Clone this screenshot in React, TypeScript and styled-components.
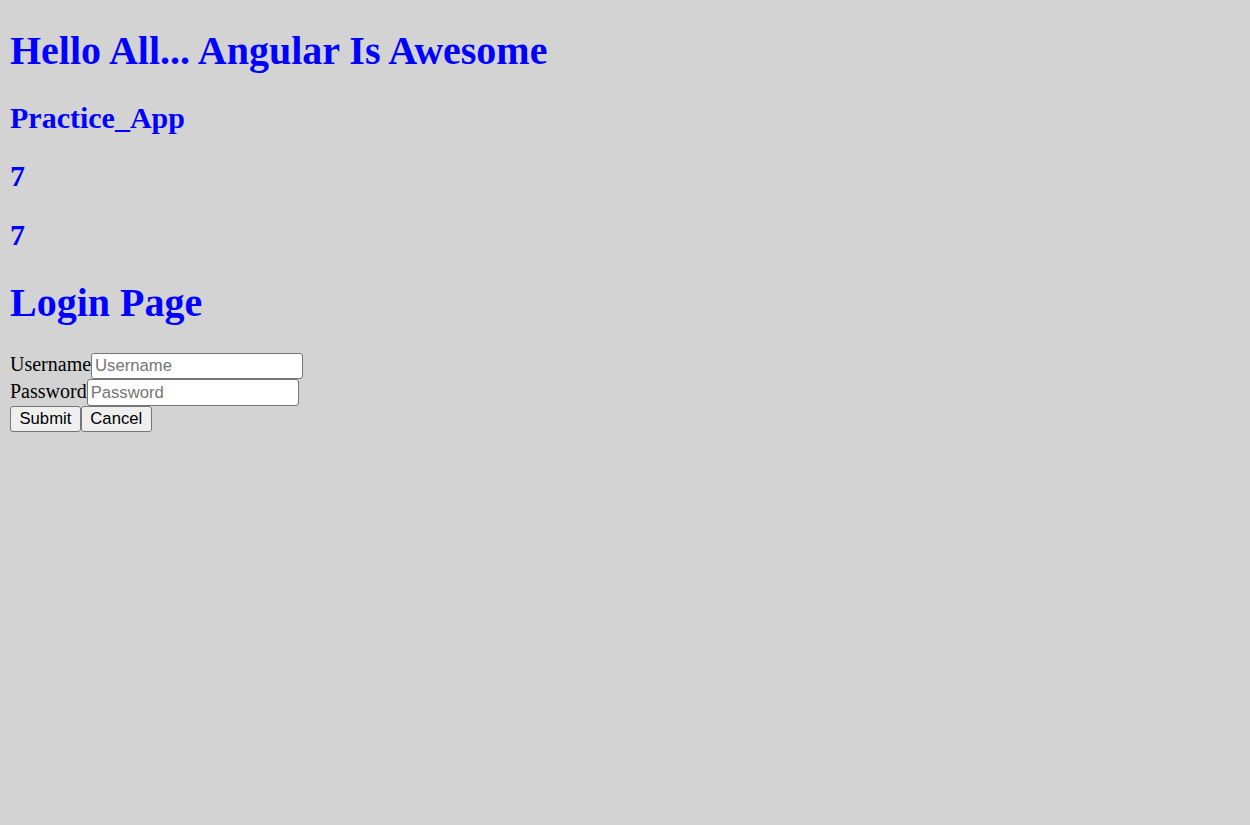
import React from "react";
import styled, { createGlobalStyle } from "styled-components";

const GlobalStyle = createGlobalStyle`
  html, body {
    background: #d3d3d3;
  }
  body {
    margin: 0 10px 10px;
    font-family: "Liberation Serif", "Times New Roman", serif;
    font-size: 20px;
    color: #000;
  }
`;

const Page = styled.main`
  display: flow-root;
`;

const Title = styled.h1`
  font-family: "Liberation Serif", "Times New Roman", serif;
  font-size: 40px;
  font-weight: bold;
  color: #0000ff;
  margin: 26.8px 0;
`;

const SubTitle = styled.h2`
  font-family: "Liberation Serif", "Times New Roman", serif;
  font-size: 30px;
  font-weight: bold;
  color: #0000ff;
  margin: 24.9px 0;
`;

const Form = styled.form`
  display: block;
`;

const Row = styled.div`
  display: flex;
  align-items: baseline;
`;

const Label = styled.label`
  font-family: "Liberation Serif", "Times New Roman", serif;
  font-size: 20px;
  color: #000;
`;

const Input = styled.input`
  box-sizing: border-box;
  width: 212px;
  height: 26.5px;
  padding: 1px 3px;
  border: 1px solid #767676;
  border-radius: 3px;
  background: #fff;
  font-family: "Liberation Sans", Arial, sans-serif;
  font-size: 16.67px;
  color: #000;
  outline: none;
  &::placeholder {
    color: #757575;
  }
`;

const Button = styled.button`
  box-sizing: border-box;
  height: 26.5px;
  padding: 1px 8.5px;
  border: 1px solid #767676;
  border-radius: 3px;
  background: #efefef;
  font-family: "Liberation Sans", Arial, sans-serif;
  font-size: 16.67px;
  color: #000;
  cursor: pointer;
`;

export default function App() {
  return (
    <>
      <GlobalStyle />
      <Page>
        <Title>Hello All... Angular Is Awesome</Title>
        <SubTitle>Practice_App</SubTitle>
        <SubTitle>7</SubTitle>
        <SubTitle>7</SubTitle>
        <Title>Login Page</Title>
        <Form onSubmit={(e) => e.preventDefault()}>
          <Row>
            <Label htmlFor="username">Username</Label>
            <Input id="username" type="text" placeholder="Username" />
          </Row>
          <Row>
            <Label htmlFor="password">Password</Label>
            <Input id="password" type="password" placeholder="Password" />
          </Row>
          <Row>
            <Button type="submit">Submit</Button>
            <Button type="button">Cancel</Button>
          </Row>
        </Form>
      </Page>
    </>
  );
}
